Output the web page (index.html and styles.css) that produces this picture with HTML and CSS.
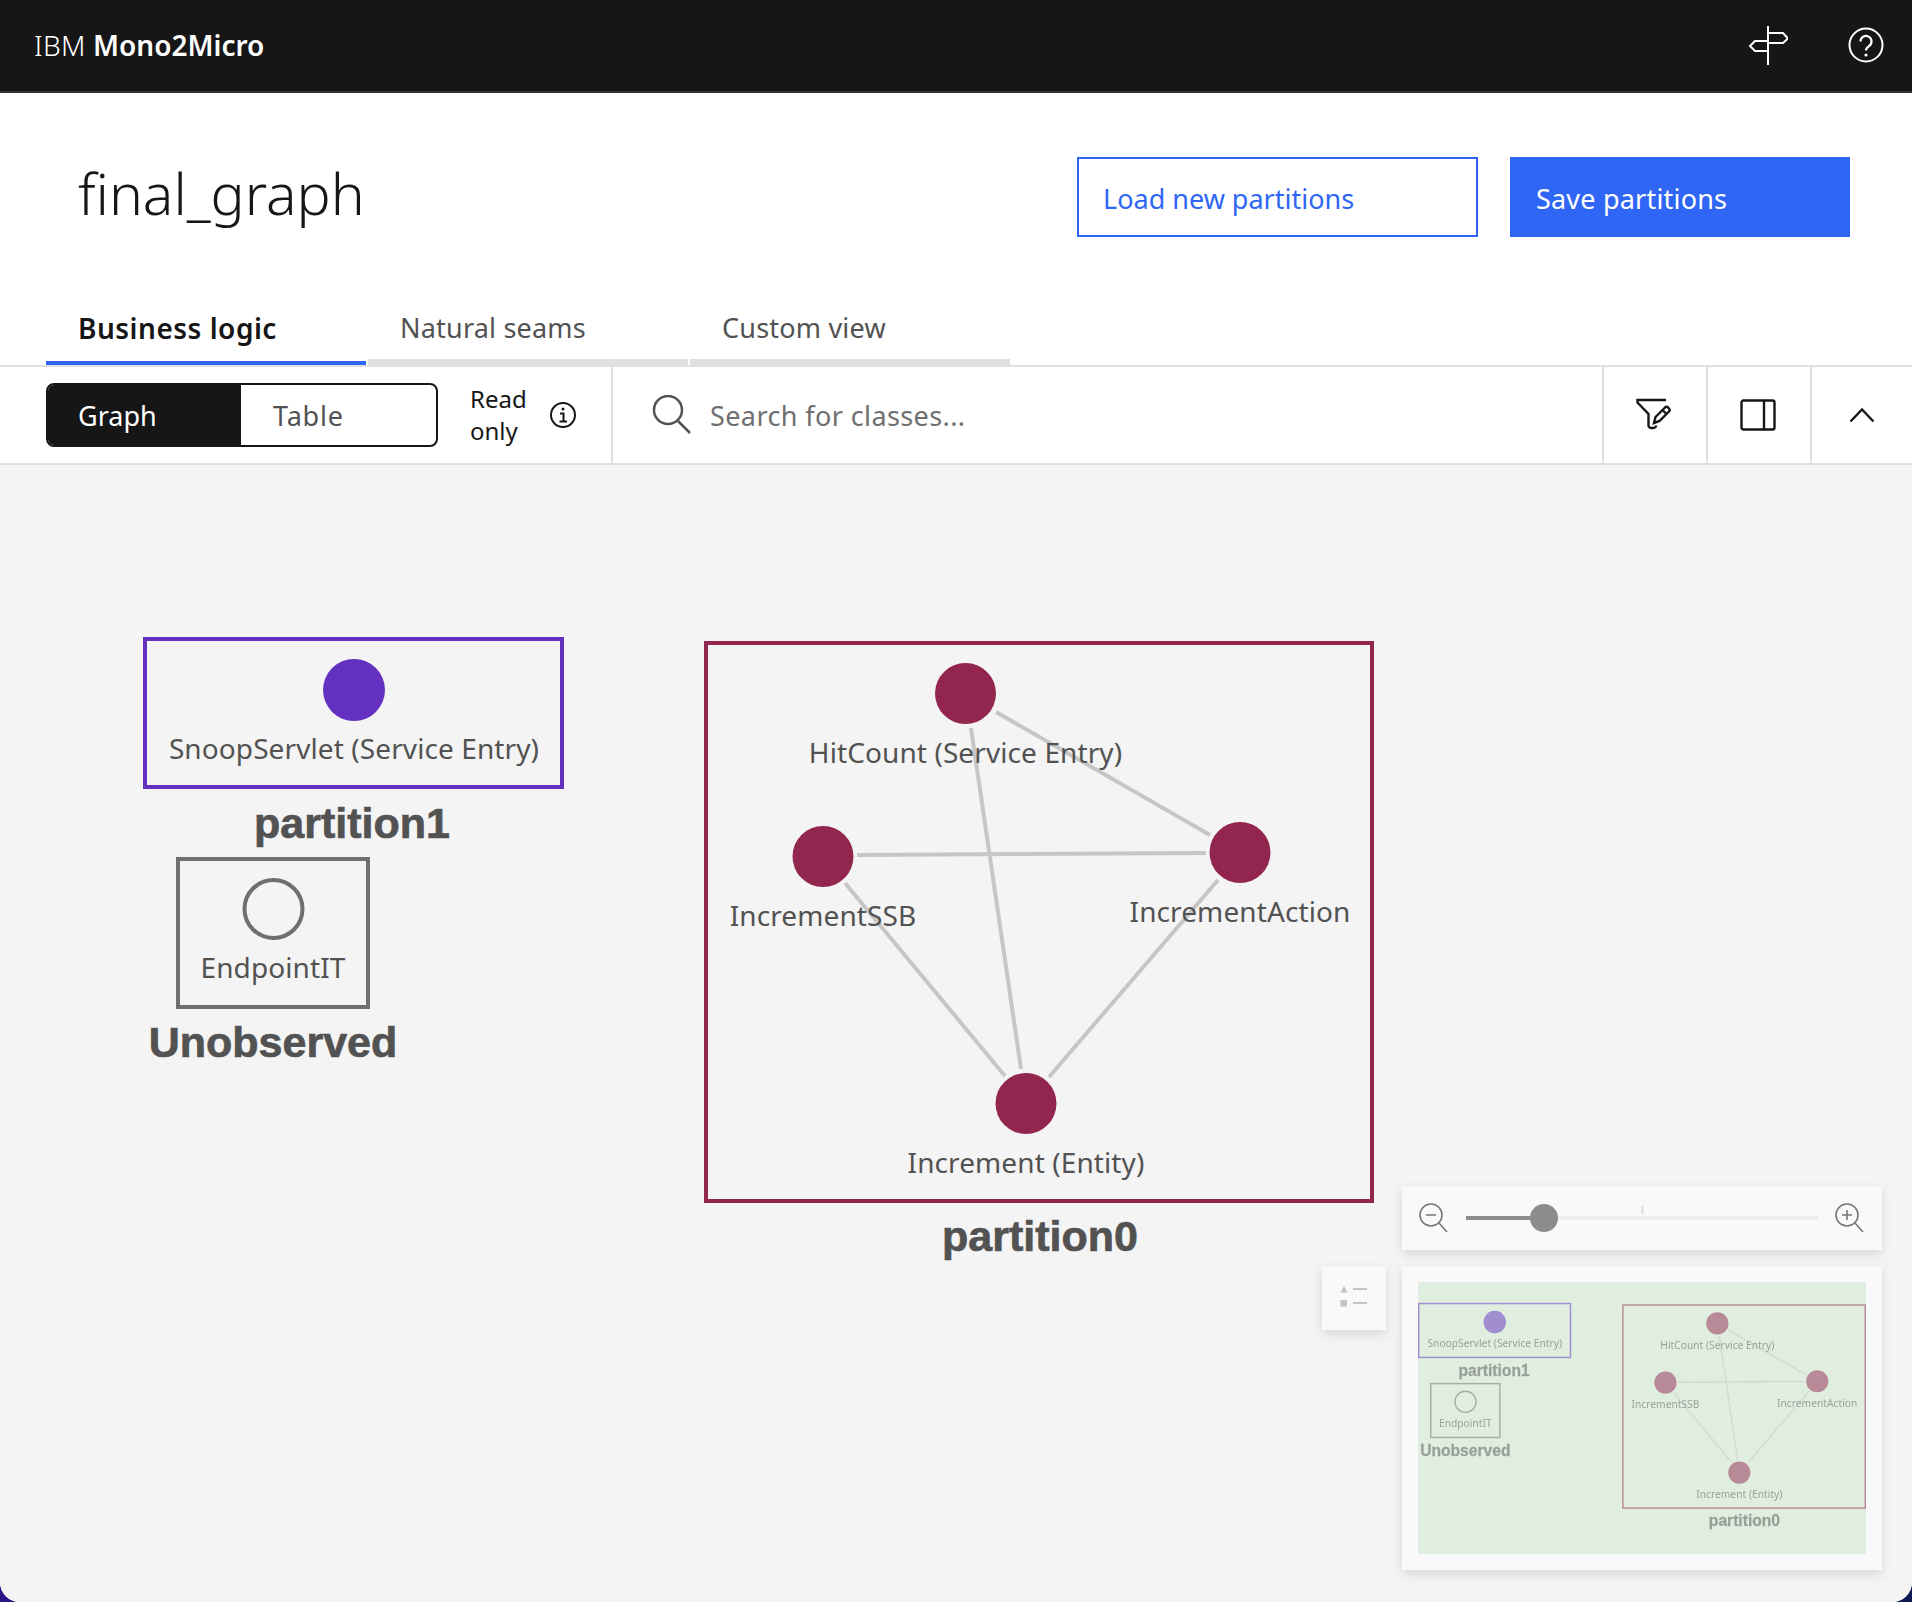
FILE: index.html
```html
<!DOCTYPE html>
<html lang="en">
<head>
    <meta charset="UTF-8">
    <meta name="viewport" content="width=device-width, initial-scale=1.0">
    <title>IBM Mono2Micro</title>
    <link rel="stylesheet" href="styles.css">
</head>
<body>
<div class="app">
    <header class="topbar">
        <div class="brand"><span class="brand-ibm">IBM</span> <b>Mono2Micro</b></div>
        <div class="topbar-icons">
            <svg class="icon-sign" width="40" height="40" viewBox="0 0 40 40" fill="none" stroke="#fff" stroke-width="2">
                <path d="M20 1V40"/>
                <path d="M20 8H35L40 13.5L35 18H20"/>
                <path d="M20 16H7L2 21L7 26H20"/>
            </svg>
            <svg class="icon-help" width="36" height="36" viewBox="0 0 36 36" fill="none" stroke="#fff" stroke-width="2">
                <circle cx="18" cy="18" r="16.5"/>
                <path d="M12.5 14.5a5.5 5.5 0 1 1 8.5 4.6c-2 1.3-3 2.2-3 4.4" stroke-width="2.2"/>
                <circle cx="18" cy="28" r="1.6" fill="#fff" stroke="none"/>
            </svg>
        </div>
    </header>

    <section class="page-head">
        <h1>final_graph</h1>
        <div class="head-actions">
            <button class="btn btn-outline">Load new partitions</button>
            <button class="btn btn-primary">Save partitions</button>
        </div>
    </section>

    <nav class="tabs">
        <a class="tab active">Business logic</a>
        <a class="tab">Natural seams</a>
        <a class="tab">Custom view</a>
    </nav>

    <section class="toolbar">
        <div class="view-tools">
            <div class="switcher">
                <span class="switch-item on">Graph</span>
                <span class="switch-item">Table</span>
            </div>
            <div class="read-only">Read<br>only</div>
            <svg class="icon-info" width="28" height="28" viewBox="0 0 28 28" fill="none" stroke="#161616" stroke-width="2">
                <circle cx="14" cy="14" r="12"/>
                <path d="M11 12.5H14.5V20M10.500 20.500H18"/>
                <circle cx="14" cy="8" r="1.5" fill="#161616" stroke="none"/>
            </svg>
        </div>
        <div class="search">
            <svg width="40" height="40" viewBox="0 0 40 40" fill="none" stroke="#525252" stroke-width="2.5">
                <circle cx="16" cy="15" r="14"/>
                <path d="M26 26L38 38"/>
            </svg>
            <span class="search-text">Search for classes...</span>
        </div>
        <div class="tool-cell">
            <svg width="40" height="40" viewBox="0 -2 40 40" fill="none" stroke="#161616" stroke-width="2.4">
                <path d="M32 3H3.500V5.500L14.500 17V28.500A2.500 2.500 0 0 0 17 31H19.500A2.500 2.500 0 0 0 22 28.500"/>
                <path d="M20 26L21.500 20L31 10.500A2.200 2.200 0 0 1 34 10.500L35 11.500A2.200 2.200 0 0 1 35 14.500L25.500 24Z"/>
                <path d="M28.500 13L32.500 17"/>
            </svg>
        </div>
        <div class="tool-cell">
            <svg width="36" height="32" viewBox="0 0 36 32" fill="none" stroke="#161616" stroke-width="2.4">
                <rect x="1.500" y="1.500" width="33" height="29" rx="2"/>
                <path d="M24 1.500V30.500"/>
            </svg>
        </div>
        <div class="tool-cell last">
            <svg width="26" height="16" viewBox="0 0 26 16" fill="none" stroke="#161616" stroke-width="2.4">
                <path d="M1.500 14.500L13 2.500L24.500 14.500"/>
            </svg>
        </div>
    </section>

    <main class="canvas">
        <svg class="graph" viewBox="0 465 1912 1137">
            <g id="graph-content">
                <rect class="box box-purple" x="145" y="639" width="417" height="148"/>
                <circle class="node-purple" cx="354" cy="690" r="31"/>
                <text class="node-label" x="354" y="759">SnoopServlet (Service Entry)</text>
                <text class="group-label" x="352" y="838">partition1</text>

                <rect class="box box-gray" x="178" y="859" width="190" height="148"/>
                <circle class="node-empty" cx="273.500" cy="909" r="29"/>
                <text class="node-label" x="273" y="978">EndpointIT</text>
                <text class="group-label" x="273" y="1057">Unobserved</text>

                <rect class="box box-magenta" x="706" y="643" width="666" height="558"/>
                <path class="edge" d="M996 712L1210 835M971 728L1021 1069M857 855L1206 853M845 883L1005 1076M1218 880L1049 1077"/>
                <circle class="node-magenta" cx="965.500" cy="693.500" r="30.500"/>
                <circle class="node-magenta" cx="1240" cy="852.500" r="30.500"/>
                <circle class="node-magenta" cx="823" cy="856.500" r="30.500"/>
                <circle class="node-magenta" cx="1026" cy="1103.500" r="30.500"/>
                <text class="node-label" x="965.500" y="763">HitCount (Service Entry)</text>
                <text class="node-label" x="823" y="926">IncrementSSB</text>
                <text class="node-label" x="1240" y="922">IncrementAction</text>
                <text class="node-label" x="1026" y="1173">Increment (Entity)</text>
                <text class="group-label" x="1040" y="1251">partition0</text>
            </g>
        </svg>

        <div class="graph-controls">
            <div class="zoom-panel">
                <svg class="zoom-icon" width="32" height="32" viewBox="0 0 32 32" fill="none" stroke="#777" stroke-width="1.6">
                    <circle cx="13" cy="13" r="11"/>
                    <path d="M21 21L29 30M8 13H18"/>
                </svg>
                <div class="slider">
                    <div class="slider-fill"></div>
                    <div class="slider-tick"></div>
                    <div class="slider-thumb"></div>
                </div>
                <svg class="zoom-icon" width="32" height="32" viewBox="0 0 32 32" fill="none" stroke="#777" stroke-width="1.6">
                    <circle cx="13" cy="13" r="11"/>
                    <path d="M21 21L29 30M8 13H18M13 8V18"/>
                </svg>
            </div>
            <div class="legend-btn">
                <svg width="28" height="24" viewBox="0 0 28 24" fill="#c4c4c4">
                    <path d="M4 0L7.500 6.500H0.500Z"/>
                    <rect x="0.500" y="14" width="6.500" height="6.500"/>
                    <rect x="13" y="2" width="14" height="2"/>
                    <rect x="13" y="16" width="14" height="2"/>
                </svg>
            </div>
            <div class="map-panel">
                <svg class="map-view" viewBox="143 580 1231 747">
                    <use href="#graph-content" class="map-content"/>
                </svg>
            </div>
        </div>
    </main>
</div>
</body>
</html>
```

FILE: styles.css
```css
* {
    box-sizing: border-box;
}
html, body {
    margin: 0;
    height: 100%;
}
body {
    background: linear-gradient(90deg, #2b1487, #0f1a52);
    font-family: "Noto Sans", Arial, sans-serif;
    color: #161616;
}
.app {
    display: flex;
    flex-direction: column;
    height: 1602px;
    background: #fff;
    border-radius: 0 0 20px 20px;
    overflow: hidden;
}

/* top bar */
.topbar {
    display: flex;
    align-items: center;
    justify-content: space-between;
    height: 93px;
    padding: 0 28px 2px 34px;
    background: #161616;
    border-bottom: 2px solid #333;
    color: #fff;
    flex: none;
}
.brand {
    font-size: 28px;
}
.brand-ibm {
    font-weight: 300;
    letter-spacing: 0.3px;
}
.brand b {
    font-weight: 600;
}
.topbar-icons {
    display: flex;
    align-items: center;
    gap: 60px;
}

/* title row */
.page-head {
    display: flex;
    align-items: flex-start;
    justify-content: space-between;
    height: 207px;
    padding: 64px 62px 0 78px;
    flex: none;
}
h1 {
    margin: 0;
    font-size: 57px;
    font-weight: 300;
    line-height: 72px;
}
.head-actions {
    display: flex;
    gap: 32px;
}
.btn {
    height: 80px;
    padding: 2px 0 0 24px;
    font: inherit;
    font-size: 27px;
    text-align: left;
    border-radius: 0;
}
.btn-outline {
    width: 401px;
    color: #2f66f5;
    background: #fff;
    border: 2px solid #2f66f5;
}
.btn-primary {
    width: 340px;
    color: #fff;
    background: #2f66f5;
    border: 0;
    padding-left: 26px;
    letter-spacing: 0.2px;
}

/* tabs */
.tabs {
    display: flex;
    gap: 2px;
    height: 65px;
    padding-left: 46px;
    flex: none;
}
.tab {
    width: 320px;
    padding: 5px 0 0 32px;
    font-size: 27px;
    line-height: 46px;
    letter-spacing: 0.2px;
    color: #525252;
    border-bottom: 6px solid #e0e0e0;
}
.tab.active {
    font-weight: 600;
    font-size: 28px;
    letter-spacing: 0.5px;
    color: #161616;
    border-bottom: 4px solid #2f66f5;
    height: 65px;
}

/* toolbar */
.toolbar {
    display: flex;
    height: 100px;
    background: #fff;
    border-top: 2px solid #e0e0e0;
    border-bottom: 2px solid #e0e0e0;
    flex: none;
}
.view-tools {
    display: flex;
    align-items: center;
    width: 613px;
    padding-left: 46px;
    border-right: 2px solid #e0e0e0;
}
.switcher {
    display: flex;
    width: 392px;
    height: 64px;
    background: #fff;
    border: 2px solid #161616;
    border-radius: 8px;
    overflow: hidden;
}
.switch-item {
    width: 196px;
    padding: 1px 0 0 32px;
    font-size: 27px;
    line-height: 60px;
    letter-spacing: 0.8px;
    color: #525252;
}
.switch-item.on {
    width: 194px;
    padding-left: 30px;
    letter-spacing: 0;
    color: #fff;
    background: #161616;
}
.read-only {
    margin-left: 32px;
    font-size: 24px;
    line-height: 32px;
}
.icon-info {
    margin-left: 22px;
}
.search {
    display: flex;
    align-items: center;
    flex: 1;
    padding-left: 39px;
}
.search-text {
    margin-left: 18px;
    font-size: 27px;
    letter-spacing: 0.4px;
    color: #6f6f6f;
}
.tool-cell {
    display: flex;
    align-items: center;
    justify-content: center;
    width: 104px;
    padding-right: 2px;
    border-left: 2px solid #e0e0e0;
}
.tool-cell.last {
    width: 102px;
    padding-right: 1px;
}

/* graph canvas */
.canvas {
    position: relative;
    flex: 1;
    background: #f4f4f4;
}
.graph {
    position: absolute;
    top: 0;
    left: 0;
    width: 1912px;
    height: 1137px;
}
.box {
    fill: none;
    stroke-width: 4;
}
.box-purple {
    stroke: #6330bf;
}
.box-gray {
    stroke: #6f6f6f;
}
.box-magenta {
    stroke: #92264f;
}
.node-purple {
    fill: #6330bf;
}
.node-magenta {
    fill: #92264f;
}
.node-empty {
    fill: none;
    stroke: #6f6f6f;
    stroke-width: 4;
}
.edge {
    fill: none;
    stroke: #c6c6c6;
    stroke-width: 4;
}
.node-label {
    font-family: "Noto Sans", Arial, sans-serif;
    font-size: 28px;
    letter-spacing: 0.1px;
    fill: #525252;
    text-anchor: middle;
}
.group-label {
    font-family: "Liberation Sans", Arial, sans-serif;
    font-size: 43px;
    font-weight: 700;
    fill: #525252;
    stroke: #525252;
    stroke-width: 0.7;
    text-anchor: middle;
}

/* zoom + minimap overlay */
.graph-controls {
    position: absolute;
    right: 30px;
    bottom: 32px;
    display: grid;
    grid-template-columns: 64px 480px;
    grid-template-rows: 64px 304px;
    column-gap: 16px;
    row-gap: 16px;
}
.zoom-panel {
    grid-column: 2;
    display: flex;
    align-items: center;
    justify-content: space-between;
    padding: 0 16px;
    background: #f9f9f9;
    box-shadow: 0 4px 10px rgba(0, 0, 0, 0.12);
}
.slider {
    position: relative;
    width: 352px;
    height: 4px;
    background: #eee;
}
.slider-fill {
    width: 78px;
    height: 4px;
    background: #8c8c8c;
}
.slider-tick {
    position: absolute;
    left: 175px;
    top: -10px;
    width: 3px;
    height: 8px;
    background: #e5e5e5;
}
.slider-thumb {
    position: absolute;
    left: 64px;
    top: -12px;
    width: 28px;
    height: 28px;
    border-radius: 50%;
    background: #8c8c8c;
}
.legend-btn {
    grid-column: 1;
    grid-row: 2;
    display: flex;
    align-items: center;
    justify-content: center;
    height: 64px;
    background: #f9f9f9;
    box-shadow: 0 4px 10px rgba(0, 0, 0, 0.12);
}
.map-panel {
    grid-column: 2;
    grid-row: 2;
    padding: 16px;
    background: #f9f9f9;
    box-shadow: 0 4px 10px rgba(0, 0, 0, 0.12);
}
.map-view {
    display: block;
    width: 448px;
    height: 272px;
    background: #e0eee0;
}
.map-content {
    opacity: 0.5;
    filter: blur(0.7px);
}
```
